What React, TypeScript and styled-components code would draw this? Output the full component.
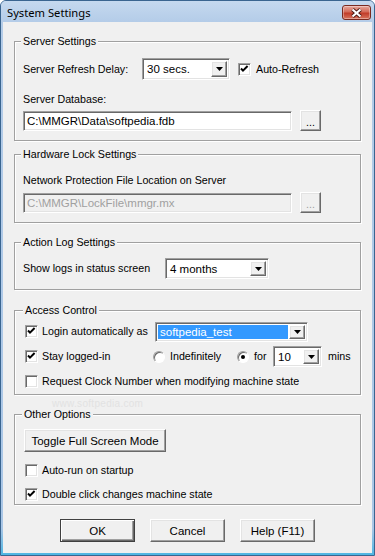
import styled, { createGlobalStyle, css } from "styled-components";

const GlobalStyle = createGlobalStyle`
  html, body {
    margin: 0;
    padding: 0;
    background: #ffffff;
  }
  body {
    font-family: "Liberation Sans", Arial, sans-serif;
    font-size: 10.7px;
    color: #000;
  }
`;

const sunken = css`
  box-sizing: border-box;
  border-style: solid;
  border-width: 1px;
  border-color: #a0a0a0 #ffffff #ffffff #a0a0a0;
  box-shadow: inset 1px 1px 0 #696969, inset -1px -1px 0 #e3e3e3;
`;

const raised = css`
  box-sizing: border-box;
  background: #f0f0f0;
  border-style: solid;
  border-width: 1px;
  border-color: #ffffff #696969 #696969 #ffffff;
  box-shadow: inset -1px -1px 0 #a0a0a0, inset 1px 1px 0 #e3e3e3;
`;

const Window = styled.div`
  width: 375px;
  height: 556px;
  box-sizing: border-box;
  display: flex;
  flex-direction: column;
  border: 1px solid #3a6590;
  border-radius: 6px 6px 0 0;
  background: #aecbea;
  overflow: hidden;
`;

const TitleBar = styled.div`
  height: 21px;
  flex-shrink: 0;
  display: flex;
  align-items: flex-start;
  justify-content: space-between;
  padding-left: 6px;
  background: linear-gradient(#c5d9ef, #b4cce8);
`;

const TitleText = styled.div`
  font-family: "Noto Sans", "Open Sans", sans-serif;
  font-size: 11.2px;
  line-height: 16px;
  padding-top: 4px;
  color: #000;
`;

const CloseButton = styled.div`
  width: 29px;
  height: 15px;
  margin: 4px 3px 0 0;
  box-sizing: border-box;
  border: 1px solid #7a2a20;
  border-radius: 3px;
  background: linear-gradient(#e7a99e, #d46a58 45%, #c13c29 55%, #d8745e);
  box-shadow: inset 0 0 0 1px rgba(255, 255, 255, 0.35);
  display: flex;
  align-items: center;
  justify-content: center;
`;

const Frame = styled.div`
  flex: 1;
  display: flex;
  padding: 0 2px 2px;
  background: linear-gradient(to bottom, #b4cce8, #a9c6e6 95%, #4fb6e3);
`;

const Client = styled.div`
  flex: 1;
  position: relative;
  display: flex;
  flex-direction: column;
  padding: 0 11px;
  background: #f0f0f0;
`;

const Group = styled.div<{ $top: number; $height: number; $pad?: number }>`
  box-sizing: border-box;
  margin-top: ${(p) => p.$top}px;
  height: ${(p) => p.$height}px;
  flex-shrink: 0;
  display: flex;
  flex-direction: column;
  align-items: flex-start;
  padding: 0 8px 0 ${(p) => p.$pad ?? 8}px;
  border: 1px solid #a0a0a0;
  box-shadow: 1px 1px 0 #ffffff, inset 1px 1px 0 #ffffff;
`;

const GroupTitle = styled.div`
  height: 13px;
  line-height: 13px;
  margin: -7px 0 0 -2px;
  padding: 0 2px;
  background: #f0f0f0;
  white-space: nowrap;
`;

const Row = styled.div<{ $top: number; $height?: number }>`
  display: flex;
  align-items: center;
  margin-top: ${(p) => p.$top}px;
  height: ${(p) => p.$height ?? 21}px;
  white-space: nowrap;
`;

const Label = styled.div<{ $top?: number; $width?: number; $gap?: number }>`
  line-height: 13px;
  margin-top: ${(p) => p.$top ?? 0}px;
  margin-left: ${(p) => p.$gap ?? 0}px;
  ${(p) => p.$width !== undefined && `width: ${p.$width}px; flex-shrink: 0;`}
  white-space: nowrap;
`;

const Cell = styled.div<{ $width: number }>`
  width: ${(p) => p.$width}px;
  flex-shrink: 0;
  display: flex;
  align-items: center;
`;

const ComboBox = styled.div<{ $width: number; $height: number }>`
  ${sunken};
  width: ${(p) => p.$width}px;
  height: ${(p) => p.$height}px;
  flex-shrink: 0;
  display: flex;
  align-items: stretch;
  padding: 2px;
  background: #ffffff;
`;

const ComboText = styled.div<{ $selected?: boolean }>`
  flex: 1;
  display: flex;
  align-items: center;
  padding-left: 2px;
  margin-right: 1px;
  font-size: 11.5px;
  background: ${(p) => (p.$selected ? "#3399ff" : "transparent")};
  color: ${(p) => (p.$selected ? "#ffffff" : "#000000")};
`;

const ComboArrow = styled.div`
  ${raised};
  width: 16px;
  flex-shrink: 0;
  display: flex;
  align-items: center;
  justify-content: center;
`;

const TextField = styled.div<{ $disabled?: boolean }>`
  ${sunken};
  width: 269px;
  height: 20px;
  display: flex;
  align-items: center;
  padding-left: 3px;
  font-size: 11.5px;
  background: ${(p) => (p.$disabled ? "#f0f0f0" : "#ffffff")};
  color: ${(p) => (p.$disabled ? "#a0a0a0" : "#000000")};
`;

const BrowseButton = styled.div<{ $disabled?: boolean }>`
  ${raised};
  width: 21px;
  height: 21px;
  margin-left: 8px;
  display: flex;
  align-items: flex-end;
  justify-content: center;
  padding-bottom: 4px;
  line-height: 8px;
  color: ${(p) => (p.$disabled ? "#a0a0a0" : "#000000")};
`;

const CheckBox = styled.div<{ $gap?: number }>`
  ${sunken};
  width: 13px;
  height: 13px;
  flex-shrink: 0;
  margin-left: ${(p) => p.$gap ?? 0}px;
  background: #ffffff;
  display: flex;
  align-items: center;
  justify-content: center;
`;

const Radio = styled.div`
  box-sizing: border-box;
  width: 12px;
  height: 12px;
  flex-shrink: 0;
  border-radius: 50%;
  border: 1px solid;
  border-color: #a0a0a0 #ffffff #ffffff #a0a0a0;
  box-shadow: inset 1px 1px 0 #696969;
  background: #ffffff;
  display: flex;
  align-items: center;
  justify-content: center;
`;

const RadioDot = styled.div`
  width: 4px;
  height: 4px;
  border-radius: 50%;
  background: #000;
`;

const PushButton = styled.div<{ $width: number; $default?: boolean }>`
  ${raised};
  width: ${(p) => p.$width}px;
  height: 23px;
  display: flex;
  align-items: center;
  justify-content: center;
  font-size: 11.5px;
  ${(p) =>
    p.$default &&
    css`
      border-color: #404040;
      box-shadow: inset 1px 1px 0 #ffffff, inset -1px -1px 0 #696969,
        inset -2px -2px 0 #a0a0a0;
    `}
`;

const ButtonRow = styled.div`
  margin-top: 14px;
  display: flex;
  justify-content: center;
  gap: 15px;
`;

const Watermark = styled.div`
  position: absolute;
  left: 49px;
  top: 376px;
  font-size: 10px;
  color: #e2e2e2;
  letter-spacing: 0.3px;
`;

function CheckMark() {
  return (
    <svg width="9" height="9" viewBox="0 0 9 9">
      <path d="M1 3.5 L3 5.6 L7.6 1" fill="none" stroke="#000" strokeWidth="2" />
    </svg>
  );
}

function Arrow() {
  return (
    <svg width="7" height="4" viewBox="0 0 7 4">
      <path d="M0 0 H7 L3.5 4 Z" fill="#000" />
    </svg>
  );
}

function Combo({ width, height, value, selected }: { width: number; height: number; value: string; selected?: boolean }) {
  return (
    <ComboBox $width={width} $height={height}>
      <ComboText $selected={selected}>{value}</ComboText>
      <ComboArrow>
        <Arrow />
      </ComboArrow>
    </ComboBox>
  );
}

function Check({ checked, gap }: { checked?: boolean; gap?: number }) {
  return <CheckBox $gap={gap}>{checked && <CheckMark />}</CheckBox>;
}

export default function App() {
  return (
    <Window>
      <GlobalStyle />
      <TitleBar>
        <TitleText>System Settings</TitleText>
        <CloseButton>
          <svg width="13" height="10" viewBox="0 0 13 10">
            <path d="M2.5 1.5 L10.5 8.5 M10.5 1.5 L2.5 8.5" stroke="#4a1a14" strokeWidth="4" />
            <path d="M2.5 1.5 L10.5 8.5 M10.5 1.5 L2.5 8.5" stroke="#ffffff" strokeWidth="2.2" />
          </svg>
        </CloseButton>
      </TitleBar>
      <Frame>
        <Client>
          <Group $top={19} $height={100}>
            <GroupTitle>Server Settings</GroupTitle>
            <Row $top={10} $height={22}>
              <Label $width={119}>Server Refresh Delay:</Label>
              <Combo width={88} height={22} value="30 secs." />
              <Check checked gap={8} />
              <Label $gap={5}>Auto-Refresh</Label>
            </Row>
            <Label $top={13}>Server Database:</Label>
            <Row $top={4}>
              <TextField>C:\MMGR\Data\softpedia.fdb</TextField>
              <BrowseButton>...</BrowseButton>
            </Row>
          </Group>

          <Group $top={13} $height={69}>
            <GroupTitle>Hardware Lock Settings</GroupTitle>
            <Label $top={13}>Network Protection File Location on Server</Label>
            <Row $top={5}>
              <TextField $disabled>C:\MMGR\LockFile\mmgr.mx</TextField>
              <BrowseButton $disabled>...</BrowseButton>
            </Row>
          </Group>

          <Group $top={19} $height={48}>
            <GroupTitle>Action Log Settings</GroupTitle>
            <Row $top={9}>
              <Label $width={142}>Show logs in status screen</Label>
              <Combo width={104} height={21} value="4 months" />
            </Row>
          </Group>

          <Group $top={20} $height={85} $pad={10}>
            <GroupTitle>Access Control</GroupTitle>
            <Row $top={4}>
              <Cell $width={130}>
                <Check checked />
                <Label $gap={4}>Login automatically as</Label>
              </Cell>
              <Combo width={153} height={20} value="softpedia_test" selected />
            </Row>
            <Row $top={4}>
              <Cell $width={128}>
                <Check checked />
                <Label $gap={4}>Stay logged-in</Label>
              </Cell>
              <Cell $width={84}>
                <Radio />
                <Label $gap={5}>Indefinitely</Label>
              </Cell>
              <Cell $width={36}>
                <Radio>
                  <RadioDot />
                </Radio>
                <Label $gap={5}>for</Label>
              </Cell>
              <Combo width={49} height={21} value="10" />
              <Label $gap={6}>mins</Label>
            </Row>
            <Row $top={4}>
              <Check />
              <Label $gap={4}>Request Clock Number when modifying machine state</Label>
            </Row>
          </Group>

          <Watermark>www.softpedia.com</Watermark>

          <Group $top={19} $height={91} $pad={9}>
            <GroupTitle>Other Options</GroupTitle>
            <Row $top={8} $height={23}>
              <PushButton $width={142}>Toggle Full Screen Mode</PushButton>
            </Row>
            <Row $top={12} $height={13}>
              <Check gap={1} />
              <Label $gap={4}>Auto-run on startup</Label>
            </Row>
            <Row $top={11} $height={13}>
              <Check checked gap={1} />
              <Label $gap={4}>Double click changes machine state</Label>
            </Row>
          </Group>

          <ButtonRow>
            <PushButton $width={75} $default>
              OK
            </PushButton>
            <PushButton $width={75}>Cancel</PushButton>
            <PushButton $width={75}>Help (F11)</PushButton>
          </ButtonRow>
        </Client>
      </Frame>
    </Window>
  );
}
